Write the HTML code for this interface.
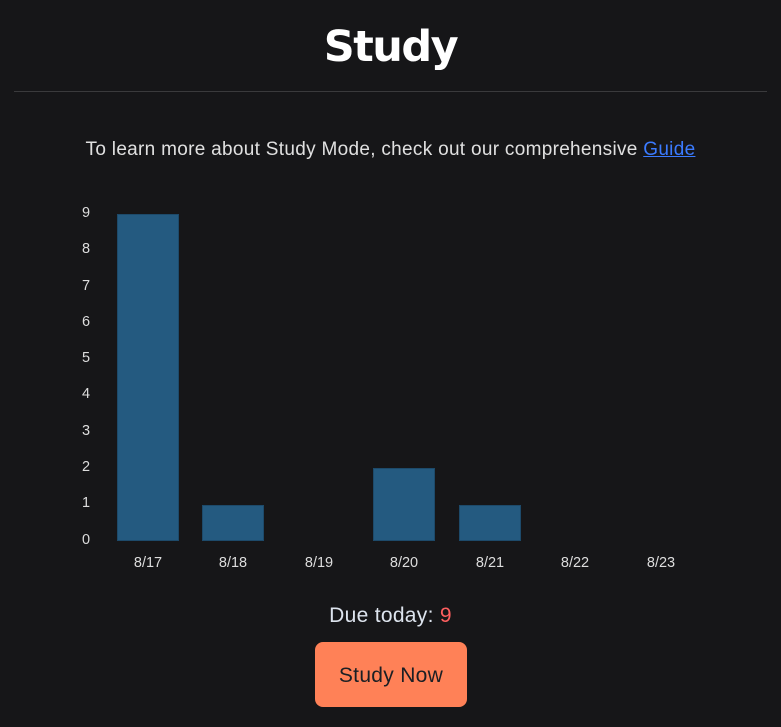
<!DOCTYPE html>
<html><head><style>
body{margin:0;background:#161618;width:781px;height:727px;overflow:hidden;font-family:"Liberation Sans","DejaVu Sans",sans-serif;color:#dcdcdc;position:relative}
h1{position:absolute;top:22px;left:0;width:781px;text-align:center;margin:0;font-size:43px;font-weight:bold;color:#fff;font-family:"DejaVu Sans","Liberation Sans",sans-serif;letter-spacing:-1.5px}
.hr{position:absolute;top:91px;left:14px;width:753px;height:1px;background:#3a3a3c}
.p{position:absolute;top:139px;left:0;width:781px;text-align:center;font-size:19px;letter-spacing:0.3px;color:#e0e0e0}
.p a{color:#3b7bff;text-decoration:underline}
.bar{position:absolute;background:#245a80;border:1px solid #1d4a6a;box-sizing:border-box;width:62px}
.y{position:absolute;left:82px;font-size:14.5px;color:#ddd;font-family:"Liberation Sans",sans-serif}
.x{position:absolute;top:555px;width:60px;text-align:center;font-size:14.5px;color:#ddd}
.due{position:absolute;top:604px;left:0;width:781px;text-align:center;font-size:21px;letter-spacing:0.3px;color:#dde4ee}
.due span{color:#ff5f5f}
.btn{position:absolute;left:315px;top:642px;width:152px;height:65px;background:#ff8157;border-radius:8px;color:#1b1f24;font-size:21px;letter-spacing:0.3px;text-align:center;line-height:67px}
</style></head><body>
<h1>Study</h1>
<div class="hr"></div>
<div class="p">To learn more about Study Mode, check out our comprehensive <a>Guide</a></div>
<div class="y" style="top:205px">9</div>
<div class="y" style="top:241px">8</div>
<div class="y" style="top:278px">7</div>
<div class="y" style="top:314px">6</div>
<div class="y" style="top:350px">5</div>
<div class="y" style="top:386px">4</div>
<div class="y" style="top:423px">3</div>
<div class="y" style="top:459px">2</div>
<div class="y" style="top:495px">1</div>
<div class="y" style="top:532px">0</div>
<div class="bar" style="left:117px;top:214px;height:327px"></div>
<div class="bar" style="left:202px;top:505px;height:36px"></div>
<div class="bar" style="left:373px;top:468px;height:73px"></div>
<div class="bar" style="left:459px;top:505px;height:36px"></div>
<div class="x" style="left:118px">8/17</div>
<div class="x" style="left:203px">8/18</div>
<div class="x" style="left:289px">8/19</div>
<div class="x" style="left:374px">8/20</div>
<div class="x" style="left:460px">8/21</div>
<div class="x" style="left:545px">8/22</div>
<div class="x" style="left:631px">8/23</div>
<div class="due">Due today: <span>9</span></div>
<div class="btn">Study Now</div>
</body></html>
